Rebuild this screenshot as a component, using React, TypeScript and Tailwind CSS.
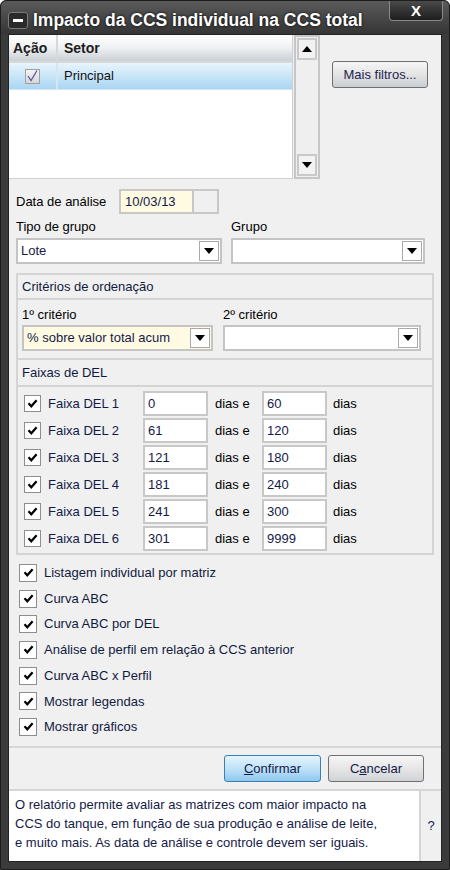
import React from "react";

const font = "font-['Liberation_Sans',Arial,sans-serif]";

function Tick() {
  return (
    <svg width="11" height="11" viewBox="0 0 11 11">
      <path d="M1.5 5.2 L4.3 8.3 L9.6 2.2" fill="none" stroke="#000" strokeWidth="2.2" />
    </svg>
  );
}

function CheckBox({ size = 17 }: { size?: number }) {
  return (
    <span
      className={`${size === 18 ? "w-[18px] h-[18px]" : "w-[17px] h-[17px]"} shrink-0 bg-white border border-[#8e8e8e] flex items-center justify-center`}
    >
      <Tick />
    </span>
  );
}

function Tri({ up = false }: { up?: boolean }) {
  return (
    <svg width="10" height="6" viewBox="0 0 10 6">
      {up ? <path d="M0 6 L5 0 L10 6 Z" fill="#000" /> : <path d="M0 0 L10 0 L5 6 Z" fill="#000" />}
    </svg>
  );
}

function Combo({ value, yellow = false, className = "" }: { value?: string; yellow?: boolean; className?: string }) {
  return (
    <div
      className={`h-[26px] border-2 border-[#c4c4c4] flex items-center justify-between pl-[3px] pr-[1px] ${
        yellow ? "bg-[#fffbe3]" : "bg-white"
      } ${className}`}
    >
      <span className="text-[13px] text-[#141a48] whitespace-nowrap overflow-hidden">{value}</span>
      <span className="w-[20px] h-[20px] shrink-0 border border-[#a9a9a9] bg-white flex items-center justify-center">
        <Tri />
      </span>
    </div>
  );
}

function Input({ value }: { value: string }) {
  return (
    <div className="w-[65px] h-[25px] bg-white border-2 border-[#c8c8c8] flex items-center pl-[3px] text-[13px] text-[#141a48]">
      {value}
    </div>
  );
}

const faixas = [
  ["0", "60"],
  ["61", "120"],
  ["121", "180"],
  ["181", "240"],
  ["241", "300"],
  ["301", "9999"],
];

const opcoes = [
  "Listagem individual por matriz",
  "Curva ABC",
  "Curva ABC por DEL",
  "Análise de perfil em relação à CCS anterior",
  "Curva ABC x Perfil",
  "Mostrar legendas",
  "Mostrar gráficos",
];

export default function App() {
  return (
    <div className={`${font} w-[450px] h-[870px] bg-[#3b3b3b] flex flex-col rounded-t-[6px] border border-[#1c1c1c]`}>
      {/* TITLE BAR */}
      <div className="h-[33px] shrink-0 flex items-start bg-gradient-to-b from-[#5b5b5b] to-[#353535] rounded-t-[6px]">
        <div className="ml-[7px] mt-[11px] w-[20px] h-[17px] rounded-[3px] bg-[#2a2a2a] border border-[#7a7a7a] flex items-center justify-center">
          <span className="w-[10px] h-[3px] bg-white" />
        </div>
        <div className="ml-[5px] mt-[6px] text-[17.5px] font-bold text-white [text-shadow:0_0_3px_#000] whitespace-nowrap">
          Impacto da CCS individual na CCS total
        </div>
        <div className="ml-auto mr-[6px] w-[54px] h-[20px] rounded-b-[4px] bg-gradient-to-b from-[#4a4a4a] to-[#1e1e1e] border border-[#8a8a8a] border-t-0 flex items-center justify-center text-white font-bold text-[15px] leading-none">
          X
        </div>
      </div>

      {/* CLIENT AREA */}
      <div className="mx-[7px] flex-1 bg-[#f0f0f0] flex flex-col text-[13px] text-black border border-[#222]">
        {/* TOP: table + scroll + button */}
        <div className="h-[144px] flex shrink-0">
          <div className="w-[284px] bg-white flex flex-col border-r border-b border-[#d0d0d0]">
            <div className="h-[28px] flex bg-gradient-to-b from-[#ffffff] via-[#eef0f2] to-[#c9cfd5] border-b-2 border-[#d8d8d8] font-bold text-[14px] text-[#1c1c1c]">
              <div className="w-[49px] flex items-center pl-[4px] border-r-2 border-[#d8d8d8]">Ação</div>
              <div className="flex-1 flex items-center pl-[6px]">Setor</div>
            </div>
            <div className="h-[27px] flex bg-gradient-to-b from-[#e8f4fc] to-[#a9d6f3] border-b border-[#d8e4ee] text-[#111]">
              <div className="w-[49px] flex items-center justify-center border-r-2 border-[#d8e4ee]">
                <span className="w-[15px] h-[15px] bg-gradient-to-b from-[#f4f4f4] to-[#d6d6d6] border border-[#a0a0a0] flex items-center justify-center">
                  <svg width="11" height="12" viewBox="0 0 11 12">
                    <path d="M1 6 L4 10.5 L10 0.5" fill="none" stroke="#5a58a8" strokeWidth="1.3" />
                  </svg>
                </span>
              </div>
              <div className="flex-1 flex items-center pl-[6px]">Principal</div>
            </div>
          </div>
          <div className="ml-[1px] w-[26px] border-2 border-[#c6c6c6] bg-[#efefef] flex flex-col justify-between p-[1px]">
            <div className="h-[22px] border-2 border-[#c9c9c9] bg-[#f2f2f2] flex items-center justify-center">
              <Tri up />
            </div>
            <div className="h-[22px] border-2 border-[#c9c9c9] bg-[#f2f2f2] flex items-center justify-center">
              <Tri />
            </div>
          </div>
          <div className="ml-[12px] mt-[26px]">
            <div className="w-[96px] h-[27px] rounded-[3px] border border-[#707070] bg-gradient-to-b from-[#f6f6f6] via-[#e4e4e4] to-[#c9ced3] flex items-center justify-center text-[13px] text-[#1d2450]">
              Mais filtros...
            </div>
          </div>
        </div>

        {/* DATA DE ANÁLISE */}
        <div className="mt-[10px] h-[25px] flex items-center pl-[7px] shrink-0">
          <span className="w-[103px]">Data de análise</span>
          <div className="w-[75px] h-[25px] bg-[#fffbe3] border-2 border-[#c8c8c8] flex items-center pl-[4px] text-[#141a48]">
            10/03/13
          </div>
          <div className="w-[25px] h-[25px] border-2 border-l-0 border-[#c8c8c8]" />
        </div>

        {/* TIPO DE GRUPO / GRUPO */}
        <div className="flex pl-[7px] gap-[9px] shrink-0">
          <div className="w-[206px] flex flex-col">
            <div className="h-[24px] flex items-center pt-[2px]">Tipo de grupo</div>
            <Combo value="Lote" />
          </div>
          <div className="w-[194px] flex flex-col">
            <div className="h-[24px] flex items-center pt-[2px]">Grupo</div>
            <Combo />
          </div>
        </div>

        {/* CRITÉRIOS */}
        <div className="mt-[9px] mx-[7px] border-2 border-[#d4d4d4] shrink-0">
          <div className="h-[25px] flex items-center pl-[4px] border-b-2 border-[#d4d4d4] text-[#111a3f]">
            Critérios de ordenação
          </div>
          <div className="h-[58px] flex gap-[10px] pl-[4px]">
            <div className="w-[191px] flex flex-col">
              <div className="h-[24px] flex items-center pt-[6px]">1º critério</div>
              <Combo value="% sobre valor total acum" yellow className="mt-[1px]" />
            </div>
            <div className="w-[198px] flex flex-col">
              <div className="h-[24px] flex items-center pt-[6px]">2º critério</div>
              <Combo className="mt-[1px]" />
            </div>
          </div>
        </div>

        {/* FAIXAS DE DEL */}
        <div className="mx-[7px] border-2 border-t-0 border-[#d4d4d4] shrink-0">
          <div className="h-[27px] flex items-center pl-[4px] border-b-2 border-[#d4d4d4] text-[#111a3f]">
            Faixas de DEL
          </div>
          <div className="pt-[4px] pb-[2px] flex flex-col gap-[2px]">
            {faixas.map(([a, b], i) => (
              <div key={i} className="h-[25px] flex items-center">
                <span className="ml-[6px]">
                  <CheckBox />
                </span>
                <span className="ml-[7px] w-[95px] text-[#141a48]">Faixa DEL {i + 1}</span>
                <Input value={a} />
                <span className="ml-[7px] w-[47px]">dias e</span>
                <Input value={b} />
                <span className="ml-[6px]">dias</span>
              </div>
            ))}
          </div>
        </div>

        {/* OPÇÕES */}
        <div className="mt-[5px] pl-[10px] flex flex-col shrink-0">
          {opcoes.map((o) => (
            <div key={o} className="h-[25.7px] flex items-center">
              <CheckBox size={18} />
              <span className="ml-[7px] text-[#111a3f]">{o}</span>
            </div>
          ))}
        </div>

        {/* BOTÕES */}
        <div className="mt-[6px] border-t-2 border-[#d6d6d6] h-[43px] flex items-center justify-end gap-[7px] pr-[17px] shrink-0">
          <div className="w-[97px] h-[27px] rounded-[3px] border border-[#3c7fb1] bg-gradient-to-b from-[#e5f4fd] via-[#bfe2f8] to-[#8ec8ef] flex items-center justify-center text-[#141a48]">
            <span>
              <span className="underline">C</span>onfirmar
            </span>
          </div>
          <div className="w-[96px] h-[27px] rounded-[3px] border border-[#707070] bg-gradient-to-b from-[#f6f6f6] via-[#e6e6e6] to-[#cfd3d6] flex items-center justify-center text-[#141a48]">
            <span>
              C<span className="underline">a</span>ncelar
            </span>
          </div>
        </div>

        {/* DESCRIÇÃO */}
        <div className="flex-1 flex border-t-2 border-[#d6d6d6]">
          <div className="flex-1 bg-white border-r-2 border-[#d6d6d6] pl-[6px] pt-[4px] leading-[19px] text-[#141a48]">
            O relatório permite avaliar as matrizes com maior impacto na
            <br />
            CCS do tanque, em função de sua produção e análise de leite,
            <br />
            e muito mais. As data de análise e controle devem ser iguais.
          </div>
          <div className="w-[20px] flex items-center justify-center text-[#141a48]">?</div>
        </div>
      </div>
      <div className="h-[7px] shrink-0" />
    </div>
  );
}
